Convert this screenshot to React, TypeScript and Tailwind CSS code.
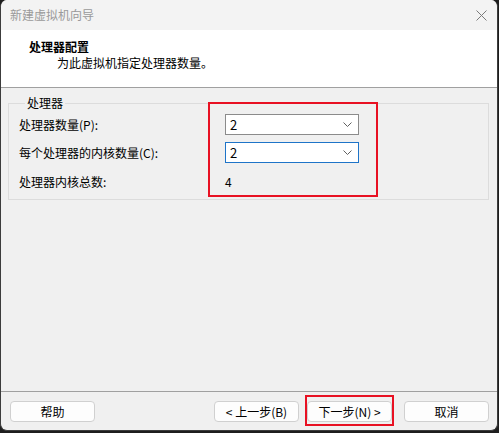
import React from "react";

function Chevron() {
  return (
    <svg width="9" height="5" viewBox="0 0 9 5">
      <path d="M0.5 0.5 L4.5 4.5 L8.5 0.5" fill="none" stroke="#606060" strokeWidth="1" />
    </svg>
  );
}

function Select({ value, focused }: { value: string; focused?: boolean }) {
  return (
    <div
      className={
        focused
          ? "w-[134px] h-[21px] bg-white border border-[#1e74c8] flex items-center justify-between pl-[4px] pr-[6px]"
          : "w-[134px] h-[21px] bg-white border border-[#8b8b8b] flex items-center justify-between pl-[4px] pr-[6px]"
      }
    >
      <span className="text-[13px] leading-[16px] text-black">{value}</span>
      <Chevron />
    </div>
  );
}

function Btn({ children, className }: { children: React.ReactNode; className?: string }) {
  return (
    <div
      className={
        "h-[21px] w-[85px] rounded-[4px] border border-[#d0d0d0] bg-[#fdfdfd] flex items-center justify-center text-[12px] leading-[14px] text-black " +
        (className ?? "")
      }
    >
      {children}
    </div>
  );
}

export default function App() {
  return (
    <div className="w-[499px] h-[433px] bg-[#1e1e1e] font-['Noto_Sans_CJK_SC',sans-serif]">
      <div className="w-[498px] h-[431px] rounded-[7px] overflow-hidden border-x border-b border-[#3c3c3c] bg-[#f0f0f0] flex flex-col">
        {/* title bar */}
        <div className="h-[30px] shrink-0 bg-[#f3f3f3] flex items-center justify-between pl-[9px] pr-[9px]">
          <span className="text-[12px] leading-[14px] text-[#9a9a9a]">新建虚拟机向导</span>
          <svg width="11" height="11" viewBox="0 0 11 11" className="mr-[1px]">
            <path d="M0.5 0.5 L10.5 10.5 M10.5 0.5 L0.5 10.5" stroke="#7a7a7a" strokeWidth="1" fill="none" />
          </svg>
        </div>
        {/* header */}
        <div className="h-[58px] shrink-0 bg-white border-b border-[#a0a0a0] pt-[9px]">
          <div className="pl-[28px] text-[12px] leading-[16px] font-bold text-black">处理器配置</div>
          <div className="pl-[56px] text-[12px] leading-[15px] text-black">为此虚拟机指定处理器数量。</div>
        </div>
        {/* content */}
        <div className="flex-1 px-[7px] pt-[8px]">
          <fieldset className="relative border border-[#dcdcdc] w-[481px] pl-[10px] pr-[10px] pb-[7px]">
            <legend className="ml-[6px] px-[2px] text-[12px] leading-[14px] text-black">处理器</legend>
            <div className="grid grid-cols-[206px_1fr] items-center gap-y-[7px] pt-[4px]">
              <span className="text-[12px] leading-[14px] text-black">处理器数量(P):</span>
              <Select value="2" />
              <span className="text-[12px] leading-[14px] text-black">每个处理器的内核数量(C):</span>
              <Select value="2" focused />
              <span className="text-[12px] leading-[14px] text-black mt-[1px]">处理器内核总数:</span>
              <span className="h-[21px] flex items-center text-[12px] leading-[14px] text-black mt-[1px]">4</span>
            </div>
            <div className="absolute left-[199px] -top-[8px] w-[170px] h-[95px] border-2 border-[#e81123] pointer-events-none" />
          </fieldset>
        </div>
        {/* footer */}
        <div className="h-[39px] shrink-0 border-t border-[#a0a0a0] pt-[9px] pl-[9px] flex">
          <Btn>帮助</Btn>
          <Btn className="ml-[119px]">&lt; 上一步(B)</Btn>
          <div className="relative ml-[8px]">
            <Btn>下一步(N) &gt;</Btn>
            <div className="absolute -left-[2px] -top-[6px] w-[89px] h-[31px] border-2 border-[#e81123]" />
          </div>
          <Btn className="ml-[12px]">取消</Btn>
        </div>
      </div>
    </div>
  );
}
